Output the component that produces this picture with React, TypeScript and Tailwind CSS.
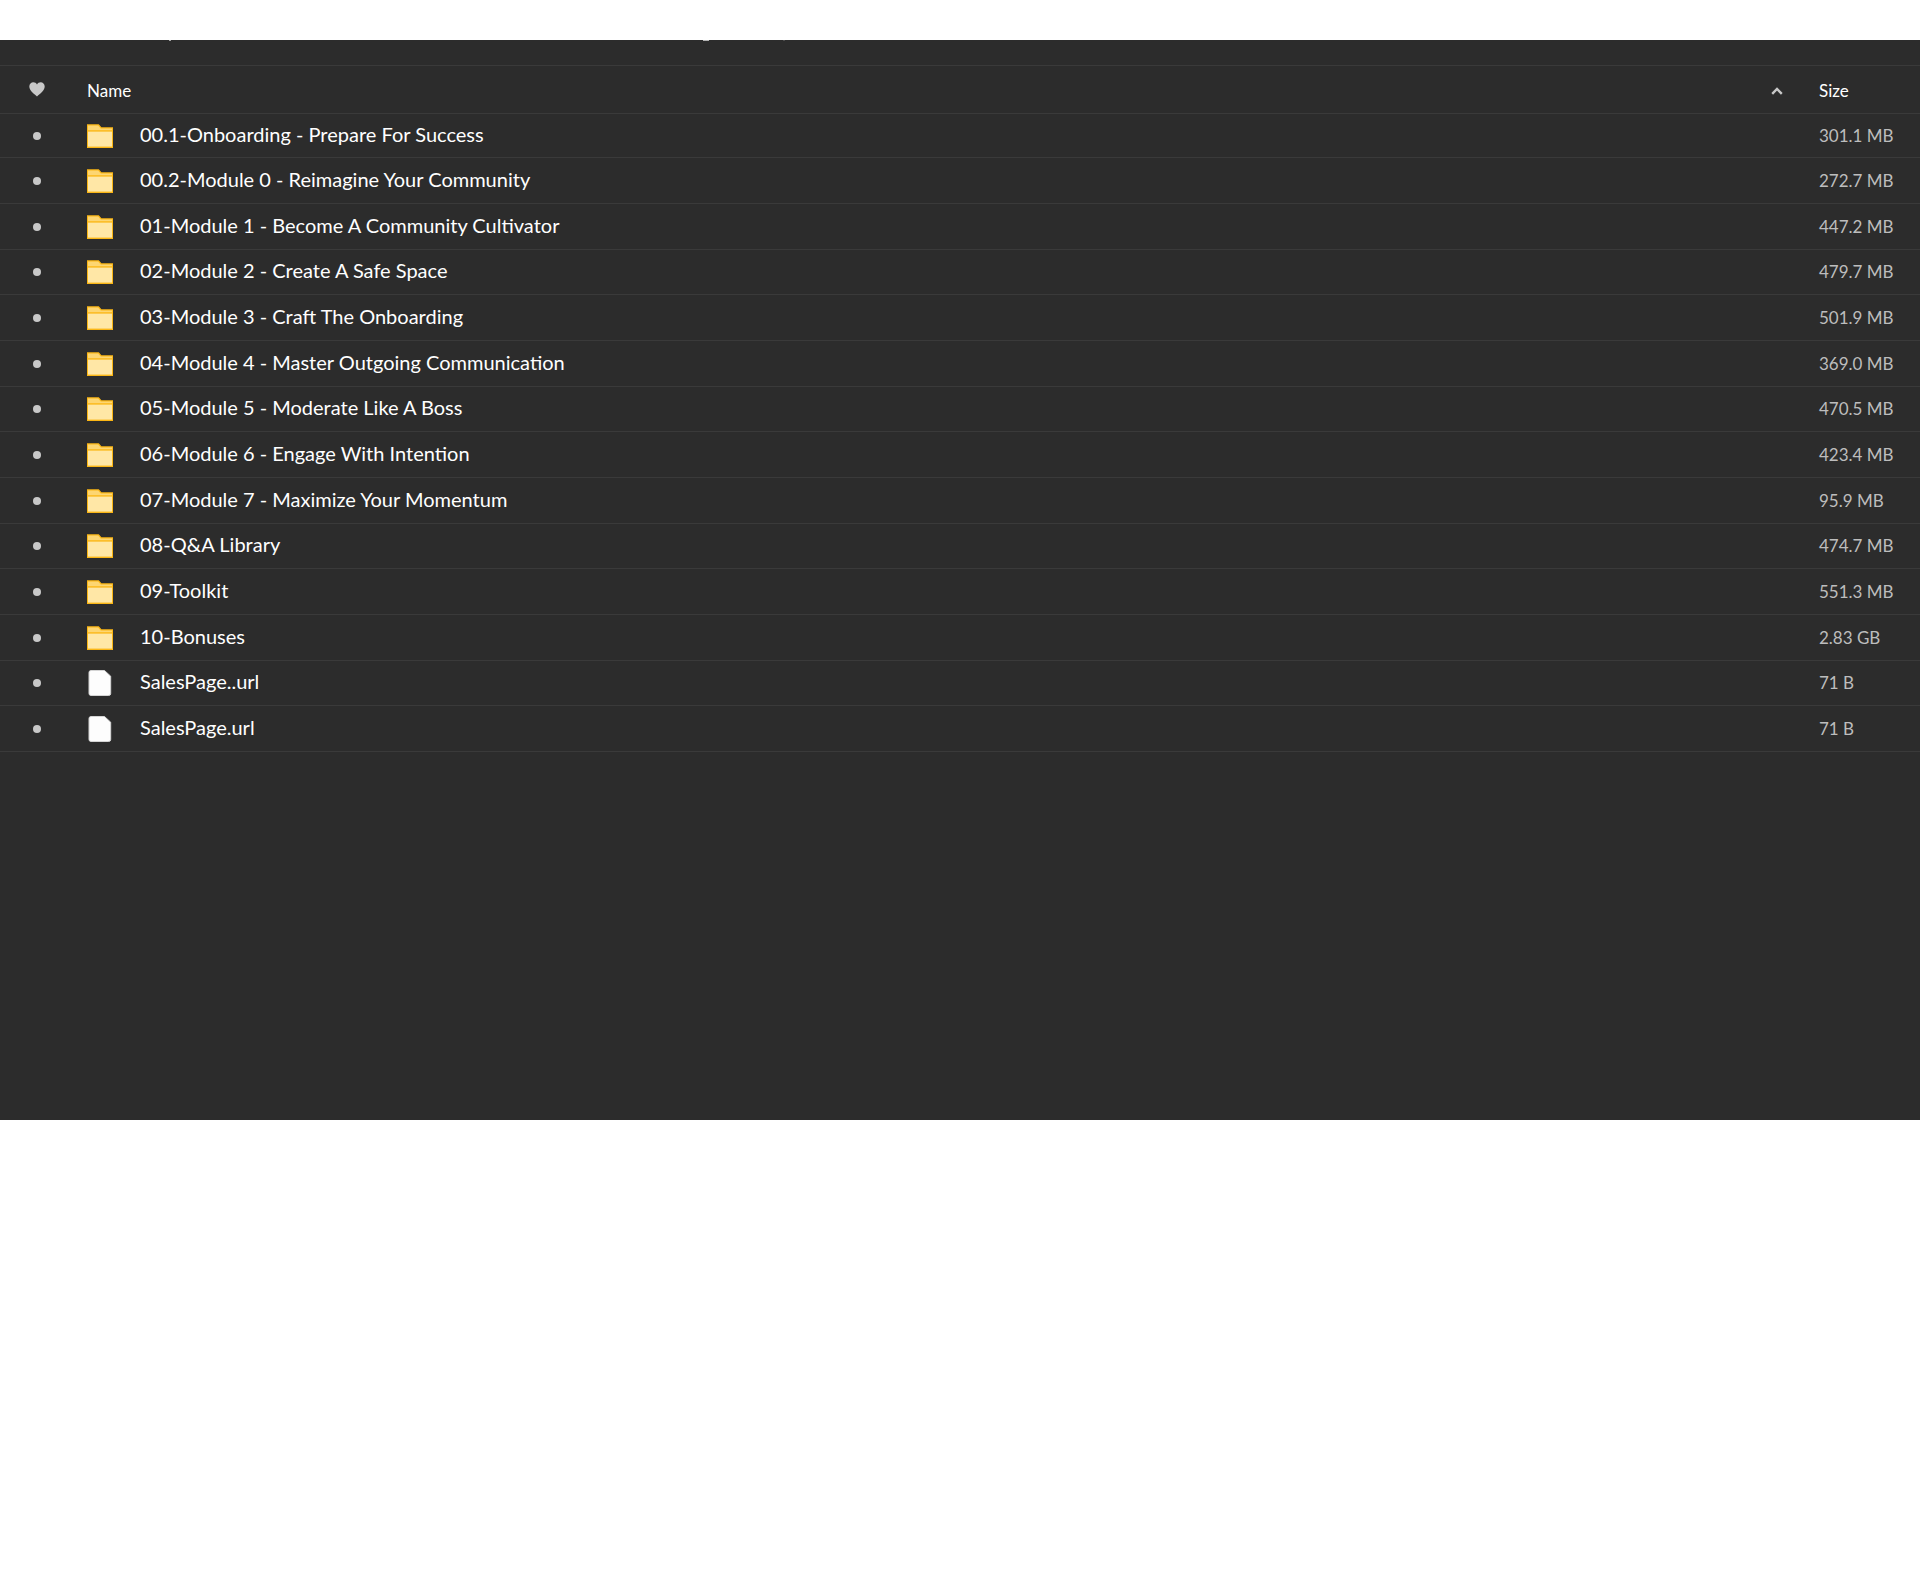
type Entry = {
  name: string
  size: string
  kind: 'folder' | 'file'
}

const entries: Entry[] = [
  { name: '00.1-Onboarding - Prepare For Success', size: '301.1 MB', kind: 'folder' },
  { name: '00.2-Module 0 - Reimagine Your Community', size: '272.7 MB', kind: 'folder' },
  { name: '01-Module 1 - Become A Community Cultivator', size: '447.2 MB', kind: 'folder' },
  { name: '02-Module 2 - Create A Safe Space', size: '479.7 MB', kind: 'folder' },
  { name: '03-Module 3 - Craft The Onboarding', size: '501.9 MB', kind: 'folder' },
  { name: '04-Module 4 - Master Outgoing Communication', size: '369.0 MB', kind: 'folder' },
  { name: '05-Module 5 - Moderate Like A Boss', size: '470.5 MB', kind: 'folder' },
  { name: '06-Module 6 - Engage With Intention', size: '423.4 MB', kind: 'folder' },
  { name: '07-Module 7 - Maximize Your Momentum', size: '95.9 MB', kind: 'folder' },
  { name: '08-Q&A Library', size: '474.7 MB', kind: 'folder' },
  { name: '09-Toolkit', size: '551.3 MB', kind: 'folder' },
  { name: '10-Bonuses', size: '2.83 GB', kind: 'folder' },
  { name: 'SalesPage..url', size: '71 B', kind: 'file' },
  { name: 'SalesPage.url', size: '71 B', kind: 'file' },
]

function FolderIcon() {
  return (
    <svg width="26" height="24" viewBox="0 0 26 24" className="block" aria-hidden="true">
      <path d="M0 0.3h11.8l2.6 3H26V24H0z" fill="#fbb614" />
      <path d="M1 1.6h10.2l2.6 3H25v1.6H1z" fill="#fdd672" />
      <path d="M1 7.6h24V22.6H1z" fill="#ffe7a6" />
    </svg>
  )
}

function FileIcon() {
  return (
    <svg width="26" height="26" viewBox="0 0 26 26" className="block" aria-hidden="true">
      <path
        d="M4 0.5h13.5L23.7 6.2v17.3a2 2 0 0 1-2 2H4a2 2 0 0 1-2-2v-21a2 2 0 0 1 2-2z"
        fill="#fdfdfd"
        stroke="#d4d4d4"
        strokeWidth="1"
      />
    </svg>
  )
}

function HeartIcon() {
  return (
    <svg width="16" height="15" viewBox="0 0 16 15" className="block" aria-hidden="true">
      <path
        d="M8 14.6C5.6 12.4 0.3 8.8 0.3 4.6C0.3 2 2.2 0.3 4.3 0.3C5.9 0.3 7.3 1.2 8 2.5C8.7 1.2 10.1 0.3 11.7 0.3C13.8 0.3 15.7 2 15.7 4.6C15.7 8.8 10.4 12.4 8 14.6Z"
        fill="#c8c8c8"
      />
    </svg>
  )
}

export default function App() {
  return (
    <div className="min-h-screen bg-white pt-10 font-['Lato',sans-serif]">
      <main className="min-h-[1080px] bg-[#2c2c2c] text-white">
        {/* lower edge of the bar scrolled out of view */}
        <div className="flex h-[25px] items-start" aria-hidden="true">
          <span className="ml-[169px] h-px w-[2px] bg-[#a8a8a8]" />
          <span className="ml-[532px] h-px w-[6px] bg-[#b4b4b4]" />
          <span className="ml-[74px] h-px w-[2px] bg-[#4c4c4c]" />
        </div>

        <table className="w-full table-fixed border-separate border-spacing-0 text-left">
          <colgroup>
            <col className="w-[87px]" />
            <col />
            <col className="w-[101px]" />
          </colgroup>
          <thead>
            <tr className="h-[49px]">
              <th className="border-y border-[#3a3a3a] pb-px pl-[29px]">
                <button type="button" aria-label="Favourite" className="block">
                  <HeartIcon />
                </button>
              </th>
              <th className="border-y border-[#3a3a3a] pr-9 text-[17px] leading-6 font-normal">
                <button type="button" className="flex w-full items-center justify-between pt-0.5">
                  Name
                  <svg width="12" height="8" viewBox="0 0 12 8" aria-hidden="true">
                    <path d="M1.2 6.8L6 2l4.8 4.8" fill="none" stroke="#c8c8c8" strokeWidth="2.4" />
                  </svg>
                </button>
              </th>
              <th className="border-y border-[#3a3a3a] text-[17px] leading-6 font-normal">
                <button type="button" className="block pt-0.5">Size</button>
              </th>
            </tr>
          </thead>
          <tbody>
            {entries.map((entry) => (
              <tr key={entry.name} className="h-[46px] first:h-11 nth-[3n+4]:h-[45px]">
                <td className="border-b border-[#3a3a3a] pl-[33px]">
                  <span className="block size-2 rounded-full bg-[#c8c8c8]" />
                </td>
                <td className="border-b border-[#3a3a3a]">
                  <div className="flex items-center gap-[27px]">
                    {entry.kind === 'folder' ? <FolderIcon /> : <FileIcon />}
                    <span className="pb-1 text-xl leading-6">{entry.name}</span>
                  </div>
                </td>
                <td className="border-b border-[#3a3a3a] text-[17px] leading-6 text-[#bdbdbd]">{entry.size}</td>
              </tr>
            ))}
          </tbody>
        </table>
      </main>
    </div>
  )
}
